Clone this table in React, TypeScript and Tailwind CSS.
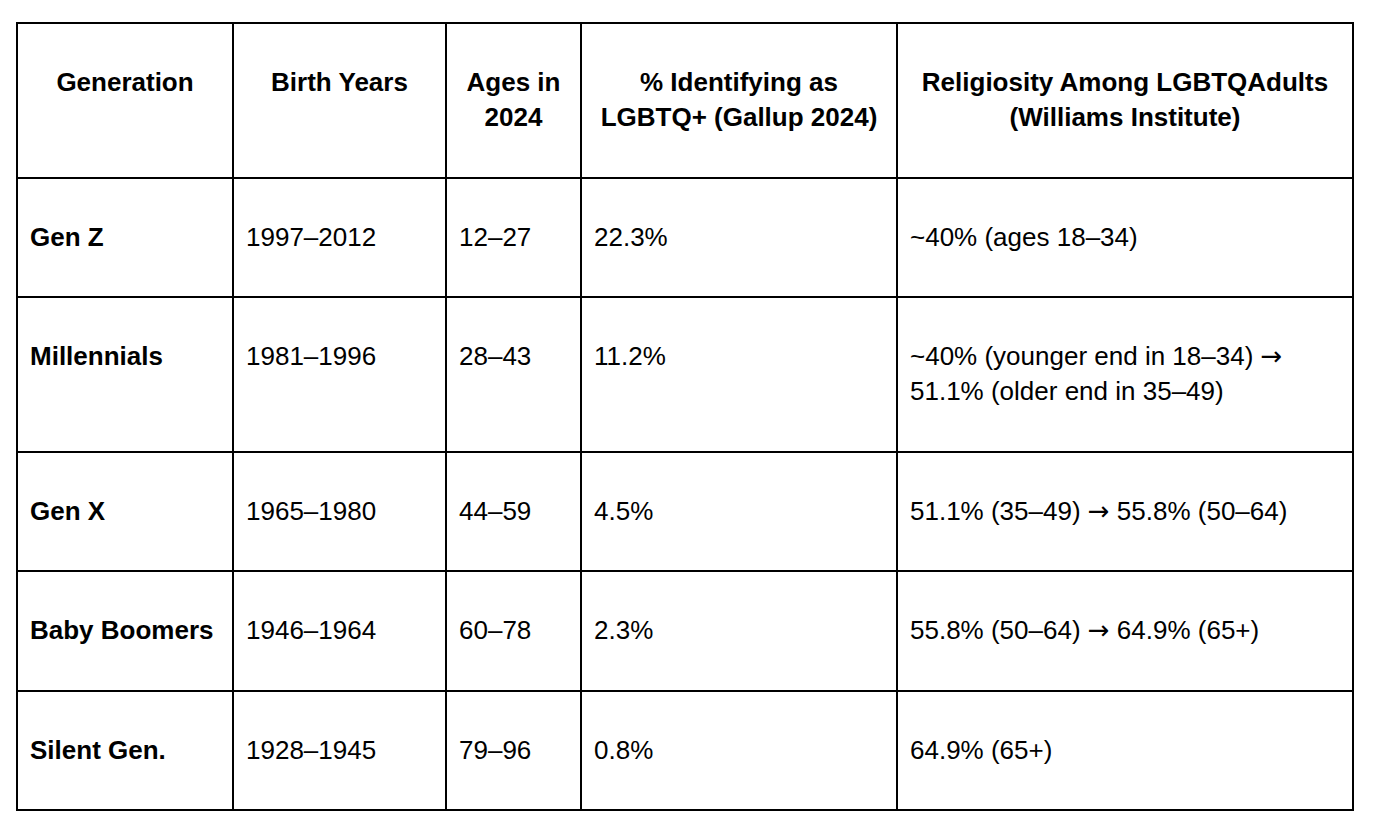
import React from 'react';

// Generation / LGBTQ+ identification table, Google-Docs style with heavy black rules.

interface Row {
  generation: string;
  birth: string;
  ages: string;
  pct: string;
  religiosity: string[];
}

const rows: Row[] = [
  { generation: 'Gen Z', birth: '1997–2012', ages: '12–27', pct: '22.3%', religiosity: ['~40% (ages 18–34)'] },
  {
    generation: 'Millennials',
    birth: '1981–1996',
    ages: '28–43',
    pct: '11.2%',
    religiosity: ['~40% (younger end in 18–34) ', ' 51.1% (older end in 35–49)'],
  },
  { generation: 'Gen X', birth: '1965–1980', ages: '44–59', pct: '4.5%', religiosity: ['51.1% (35–49) ', ' 55.8% (50–64)'] },
  { generation: 'Baby Boomers', birth: '1946–1964', ages: '60–78', pct: '2.3%', religiosity: ['55.8% (50–64) ', ' 64.9% (65+)'] },
  { generation: 'Silent Gen.', birth: '1928–1945', ages: '79–96', pct: '0.8%', religiosity: ['64.9% (65+)'] },
];

const cell = 'border-2 border-black align-top pt-[41px] pb-[41.5px] px-[12px]';

function Arrow() {
  return <span style={{ fontFamily: '"DejaVu Sans", sans-serif' }}>→</span>;
}

export default function App() {
  return (
    <div
      className="min-h-screen bg-white pl-4 pt-[22px] text-black"
      style={{ fontFamily: '"Liberation Sans", Arial, sans-serif' }}
    >
      <table className="w-[1336px] table-fixed border-collapse text-[26px] leading-[35px]">
        <colgroup>
          <col className="w-[216px]" />
          <col className="w-[213px]" />
          <col className="w-[135px]" />
          <col className="w-[316px]" />
          <col className="w-[456px]" />
        </colgroup>
        <thead>
          <tr>
            <th className={`${cell} text-center font-bold`}>Generation</th>
            <th className={`${cell} text-center font-bold`}>Birth Years</th>
            <th className={`${cell} text-center font-bold`}>
              Ages in
              <br />
              2024
            </th>
            <th className={`${cell} text-center font-bold`}>
              % Identifying as
              <br />
              LGBTQ+ (Gallup 2024)
            </th>
            <th className={`${cell} text-center font-bold`}>
              Religiosity Among LGBTQAdults
              <br />
              (Williams Institute)
            </th>
          </tr>
        </thead>
        <tbody>
          {rows.map((r) => (
            <tr key={r.generation}>
              <td className={`${cell} font-bold`}>{r.generation}</td>
              <td className={cell}>{r.birth}</td>
              <td className={cell}>{r.ages}</td>
              <td className={cell}>{r.pct}</td>
              <td className={cell}>
                {r.religiosity.map((part, i) => (
                  <React.Fragment key={i}>
                    {i > 0 && <Arrow />}
                    {part}
                  </React.Fragment>
                ))}
              </td>
            </tr>
          ))}
        </tbody>
      </table>
    </div>
  );
}
